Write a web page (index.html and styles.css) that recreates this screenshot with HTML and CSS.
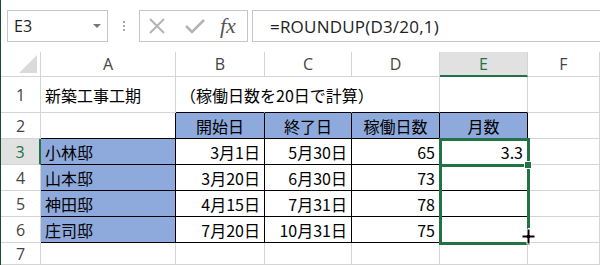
FILE: index.html
```html
<!DOCTYPE html>
<html lang="ja">
<head>
  <meta charset="UTF-8" />
  <title>新築工事工期</title>
  <link rel="stylesheet" href="styles.css">
</head>
<body>
  <div class="app">

    <!-- Name box + formula bar -->
    <div class="toolbar">
      <div class="namebox">
        <span>E3</span>
        <span class="caret"></span>
      </div>
      <div class="grip"><i></i><i></i><i></i></div>
      <div class="fxbox">
        <svg class="icon x-icon" width="18" height="16" viewBox="0 0 18 16">
          <path d="M2 1 L16 15 M16 1 L2 15" stroke="#b4b4b4" stroke-width="2" fill="none"/>
        </svg>
        <svg class="icon" width="20" height="16" viewBox="0 0 20 16">
          <path d="M1 8 L7 14 L19 2" stroke="#b4b4b4" stroke-width="2.6" fill="none"/>
        </svg>
        <span class="fx">fx</span>
      </div>
      <div class="formula">=ROUNDUP(D3/20,1)</div>
    </div>

    <!-- Worksheet -->
    <div class="sheet">
      <!-- column headers -->
      <div class="hd corner"><span class="tri"></span></div>
      <div class="hd">A</div>
      <div class="hd">B</div>
      <div class="hd">C</div>
      <div class="hd">D</div>
      <div class="hd hd-on">E</div>
      <div class="hd">F</div>

      <!-- row 1 -->
      <div class="rh">1</div>
      <div class="c">新築工事工期</div>
      <div class="c spill bb">（稼働日数を20日で計算）</div>
      <div class="c spill bb"></div>
      <div class="c bb"></div>
      <div class="c bb"></div>
      <div class="c"></div>

      <!-- row 2 -->
      <div class="rh">2</div>
      <div class="c br bb"></div>
      <div class="c blue mid br bb">開始日</div>
      <div class="c blue mid br bb">終了日</div>
      <div class="c blue mid br bb">稼働日数</div>
      <div class="c blue mid br bb">月数</div>
      <div class="c"></div>

      <!-- row 3 -->
      <div class="rh rh-on">3</div>
      <div class="c blue br bb">小林邸</div>
      <div class="c num br bb">3月1日</div>
      <div class="c num br bb">5月30日</div>
      <div class="c num br bb">65</div>
      <div class="c num br bb">3.3</div>
      <div class="c"></div>

      <!-- row 4 -->
      <div class="rh">4</div>
      <div class="c blue br bb">山本邸</div>
      <div class="c num br bb">3月20日</div>
      <div class="c num br bb">6月30日</div>
      <div class="c num br bb">73</div>
      <div class="c num br bb"></div>
      <div class="c"></div>

      <!-- row 5 -->
      <div class="rh">5</div>
      <div class="c blue br bb">神田邸</div>
      <div class="c num br bb">4月15日</div>
      <div class="c num br bb">7月31日</div>
      <div class="c num br bb">78</div>
      <div class="c num br bb"></div>
      <div class="c"></div>

      <!-- row 6 -->
      <div class="rh">6</div>
      <div class="c blue br bb">庄司邸</div>
      <div class="c num br bb">7月20日</div>
      <div class="c num br bb">10月31日</div>
      <div class="c num br bb">75</div>
      <div class="c num br bb"></div>
      <div class="c"></div>

      <!-- row 7 -->
      <div class="rh">7</div>
      <div class="c"></div>
      <div class="c"></div>
      <div class="c"></div>
      <div class="c"></div>
      <div class="c"></div>
      <div class="c"></div>

      <!-- selection / fill drag overlay -->
      <div class="range"></div>
      <div class="range-right"></div>
      <div class="active"></div>
      <div class="handle"></div>
      <svg class="cursor" width="15" height="17" viewBox="0 0 15 17">
        <path d="M6 1 H9 V7 H14 V10 H9 V16 H6 V10 H1 V7 H6 Z" fill="#000" stroke="#fff" stroke-width="1"/>
      </svg>
    </div>
  </div>
</body>
</html>
```

FILE: styles.css
```css
body {
  margin: 0;
  background: #fff;
  font-family: "Noto Sans CJK JP", sans-serif;
  overflow: hidden;
}

.app {
  border-left: 1px solid #1c4a2e; /* window edge */
  height: 265px;
}

/* ---------- formula bar ---------- */
.toolbar {
  display: flex;
  align-items: center;
  padding-top: 10px;
  margin-bottom: 10px;
  height: 32px;
}

.namebox {
  box-sizing: border-box;
  width: 101px;
  height: 32px;
  margin-left: 6px;
  border: 1px solid #c6c6c6;
  display: flex;
  align-items: center;
  justify-content: space-between;
  padding: 0 6px 0 6px;
  font-family: "Open Sans", sans-serif;
  font-size: 16px;
  color: #222;
}

.caret {
  width: 0;
  height: 0;
  border-left: 4px solid transparent;
  border-right: 4px solid transparent;
  border-top: 4px solid #777;
}

.grip {
  display: flex;
  flex-direction: column;
  gap: 2px;
  margin-left: 15px;
}
.grip i {
  width: 2px;
  height: 2px;
  background: #a8a8a8;
}

.fxbox {
  box-sizing: border-box;
  width: 109px;
  height: 32px;
  margin-left: 14px;
  border: 1px solid #c6c6c6;
  display: flex;
  align-items: center;
  padding-left: 8px;
}
.fxbox .icon {
  margin-right: 15px;
}
.fxbox .x-icon {
  margin-right: 19px;
}
.fx {
  font-family: "Liberation Serif", serif;
  font-style: italic;
  font-size: 22px;
  color: #555;
}

.formula {
  box-sizing: border-box;
  flex: 1;
  height: 32px;
  margin-left: 4px;
  border: 1px solid #c6c6c6;
  border-right: none;
  display: flex;
  align-items: center;
  padding-left: 17px;
  font-family: "Open Sans", sans-serif;
  font-size: 17px;
  letter-spacing: 0.2px;
  color: #222;
}

/* ---------- worksheet grid ---------- */
.sheet {
  position: relative;
  display: grid;
  grid-template-columns: 40px 135px 89px 87px 88px 88px 1fr;
  grid-template-rows: 25px 36px 26px 26px 26px 26px 26px 22px;
}

.hd, .rh, .c {
  box-sizing: border-box;
  border-right: 1px solid #d4d4d4;
  border-bottom: 1px solid #d4d4d4;
  display: flex;
  align-items: center;
  white-space: nowrap;
}

.hd {
  justify-content: center;
  font-family: "Open Sans", sans-serif;
  font-size: 16px;
  color: #444;
}
.hd-on {
  background: #e1e1e1;
  color: #217346;
  border-bottom: 2px solid #217346;
}

.corner {
  position: relative;
}
.tri {
  position: absolute;
  right: 3px;
  bottom: 3px;
  width: 0;
  height: 0;
  border-left: 18px solid transparent;
  border-bottom: 18px solid #dadada;
}

.rh {
  justify-content: center;
  font-family: "Open Sans", sans-serif;
  font-size: 16px;
  color: #444;
}
.rh-on {
  background: #e1e1e1;
  color: #217346;
  border-right: 2px solid #217346;
}

.c {
  padding: 0 4px;
  font-size: 16px;
  color: #000;
}

.spill {
  border-right-color: transparent;
  overflow: visible;
}

.blue {
  background: #8ea9db;
}
.mid {
  justify-content: center;
}
.num {
  justify-content: flex-end;
}

.br {
  border-right-color: #000;
}
.bb {
  border-bottom-color: #000;
}

/* ---------- selection overlay ---------- */
.active {
  position: absolute;
  left: 438px;
  top: 86px;
  width: 91px;
  height: 29px;
  box-sizing: border-box;
  border: 3px solid #217346;
}

.range {
  position: absolute;
  left: 438px;
  top: 86px;
  width: 91px;
  height: 107px;
  box-sizing: border-box;
  border-left: 3px solid #217346;
  border-bottom: 3px solid #217346;
}

.range-right {
  position: absolute;
  left: 526px;
  top: 86px;
  width: 3px;
  height: 90px;
  background: #217346;
}

.handle {
  position: absolute;
  left: 523px;
  top: 109px;
  width: 6px;
  height: 6px;
  background: #217346;
  border: 1px solid #fff;
}

.cursor {
  position: absolute;
  left: 520px;
  top: 176px;
}
```
